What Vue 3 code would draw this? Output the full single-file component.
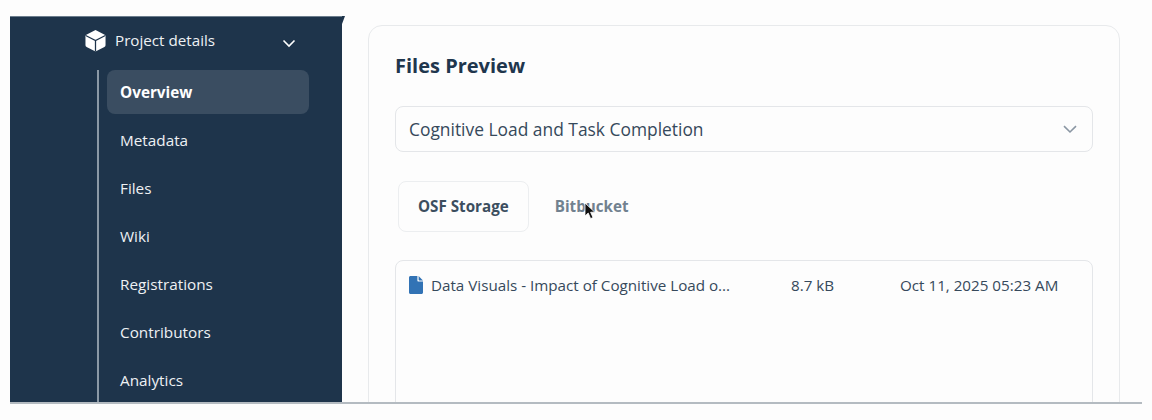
<template>
  <div class="page">
    <div class="frame">
      <aside class="sidebar">
        <div class="nav-head">
          <svg class="cube" viewBox="0 0 20 22" width="21" height="23">
            <path d="M10 1 18.8 5.6C19.3 5.9 19.6 6.4 19.6 7V15.2C19.6 16 19.2 16.7 18.5 17.1L10 21.6 1.5 17.1C.8 16.7.4 16 .4 15.2V7C.4 6.4.7 5.9 1.2 5.6Z" fill="#fff" />
            <path d="M.6 6.2 10 11 19.4 6.2M10 11V21.6" fill="none" stroke="#1e344b" stroke-width="1.2" />
          </svg>
          <span class="nav-head-label">Project details</span>
          <svg class="chev" viewBox="0 0 14 9" width="14" height="9">
            <path d="M1.5 1.5 7 7l5.5-5.5" fill="none" stroke="#fff" stroke-width="1.6" />
          </svg>
        </div>
        <ul class="nav-list">
          <li v-for="item in navItems" :key="item" class="nav-item" :class="{ active: item === 'Overview' }">
            {{ item }}
          </li>
        </ul>
      </aside>

      <main class="main">
        <section class="card">
          <h2 class="card-title">Files Preview</h2>
          <div class="select">
            <span>Cognitive Load and Task Completion</span>
            <svg viewBox="0 0 14 9" width="14" height="9">
              <path d="M1 1.2 7 7l6-5.8" fill="none" stroke="#8a96a3" stroke-width="1.6" />
            </svg>
          </div>
          <div class="tabs">
            <div class="tab active">OSF Storage</div>
            <div class="tab">Bitbucket</div>
          </div>
          <div class="files">
            <div class="file-row">
              <svg class="file-icon" viewBox="0 0 14 18" width="14" height="18">
                <path d="M1.5 0H8.4V4.6C8.4 5.2 8.8 5.6 9.4 5.6H14V16.5C14 17.3 13.3 18 12.5 18H1.5C.7 18 0 17.3 0 16.5V1.5C0 .7.7 0 1.5 0Z" fill="#3273b5" />
                <path d="M9.6 0 14 4.4H10.2C9.9 4.4 9.6 4.1 9.6 3.8Z" fill="#3273b5" />
              </svg>
              <span class="file-name">Data Visuals - Impact of Cognitive Load o...</span>
              <span class="file-size">8.7 kB</span>
              <span class="file-date">Oct 11, 2025 05:23 AM</span>
            </div>
          </div>
        </section>
      </main>

      <svg class="cursor" viewBox="0 0 12 18" width="12" height="18">
        <path d="M1 1V14L4.2 11 6.6 16.6 9 15.6 6.6 10.2H10.8Z" fill="#111" stroke="#fff" stroke-width=".8" />
      </svg>
    </div>
  </div>
</template>

<script setup>
const navItems = ['Overview', 'Metadata', 'Files', 'Wiki', 'Registrations', 'Contributors', 'Analytics']
</script>

<style>
html,
body {
  background: #fdfdfd;
}
</style>

<style scoped>
.page {
  height: 420px;
  padding: 16px 10px 16px;
  box-sizing: border-box;
  overflow: hidden;
  font-family: 'Open Sans', 'Liberation Sans', sans-serif;
  color: #2f4254;
}

.frame {
  position: relative;
  display: flex;
  height: 388px;
  border-bottom: 2px solid #b4bbc1;
  box-sizing: border-box;
}

/* little tail at the top right of the sidebar */
.frame::before {
  content: '';
  position: absolute;
  left: 332px;
  top: 0;
  width: 3px;
  height: 8px;
  background: #1e344b;
  clip-path: polygon(0 0, 100% 0, 0 100%);
}

.sidebar {
  position: relative;
  width: 332px;
  flex-shrink: 0;
  background: #1e344b;
  border-top: 1px solid #6c7d8d;
  box-sizing: border-box;
  padding-top: 11px;
  overflow: hidden;
}

.nav-head {
  display: flex;
  align-items: center;
  height: 24px;
  padding-left: 75px;
  color: #eef1f4;
  font-size: 15.2px;
}

.cube {
  flex-shrink: 0;
}

.nav-head-label {
  margin-left: 9px;
  width: 167px;
}

.chev {
  margin-top: 6px;
}

.nav-list {
  list-style: none;
  margin: 18px 0 0 87px;
  padding: 0 0 0 8px;
  border-left: 2px solid #8b99a6;
  height: 340px;
  display: flex;
  flex-direction: column;
  gap: 4px;
}

.nav-item {
  width: 202px;
  height: 44px;
  flex-shrink: 0;
  box-sizing: border-box;
  padding-left: 13px;
  display: flex;
  align-items: center;
  border-radius: 8px;
  color: #eef1f4;
  font-size: 15.3px;
}

.nav-item.active {
  background: #3a4d61;
  font-weight: 700;
  color: #fff;
}

.main {
  flex: 1;
  padding: 9px 22px 0 26px;
  overflow: hidden;
}

.card {
  height: 420px;
  box-sizing: border-box;
  border: 1px solid #e8eaec;
  border-radius: 14px;
  padding: 25px 26px 0;
}

.card-title {
  margin: 0;
  font-size: 20px;
  line-height: 30px;
  font-weight: 700;
  color: #1f364d;
}

.select {
  margin-top: 25px;
  height: 46px;
  box-sizing: border-box;
  border: 1px solid #e4e6e9;
  border-radius: 8px;
  display: flex;
  align-items: center;
  justify-content: space-between;
  padding: 0 15px 0 13px;
  font-size: 17.4px;
  color: #36495b;
}

.select span {
  margin-top: -1px;
}

.tabs {
  display: flex;
  margin-top: 29px;
  padding-left: 3px;
  gap: 6px;
}

.tab {
  height: 51px;
  box-sizing: border-box;
  padding: 0 19px 2px;
  display: flex;
  align-items: center;
  border: 1px solid transparent;
  border-radius: 8px;
  font-size: 15.2px;
  font-weight: 700;
  color: #71818f;
}

.tab.active {
  border-color: #eceef0;
  color: #3c4e5f;
}

.files {
  margin-top: 28px;
  height: 300px;
  border: 1px solid #e4e6e9;
  border-radius: 8px;
  padding: 14px 13px;
}

.file-row {
  display: flex;
  align-items: center;
  height: 20px;
  font-size: 15.2px;
  color: #36495b;
}

.file-icon {
  flex-shrink: 0;
}

.file-name {
  margin-left: 8px;
  width: 360px;
  white-space: nowrap;
}

.file-size {
  width: 109px;
}

.cursor {
  position: absolute;
  left: 574px;
  top: 186px;
}
</style>
